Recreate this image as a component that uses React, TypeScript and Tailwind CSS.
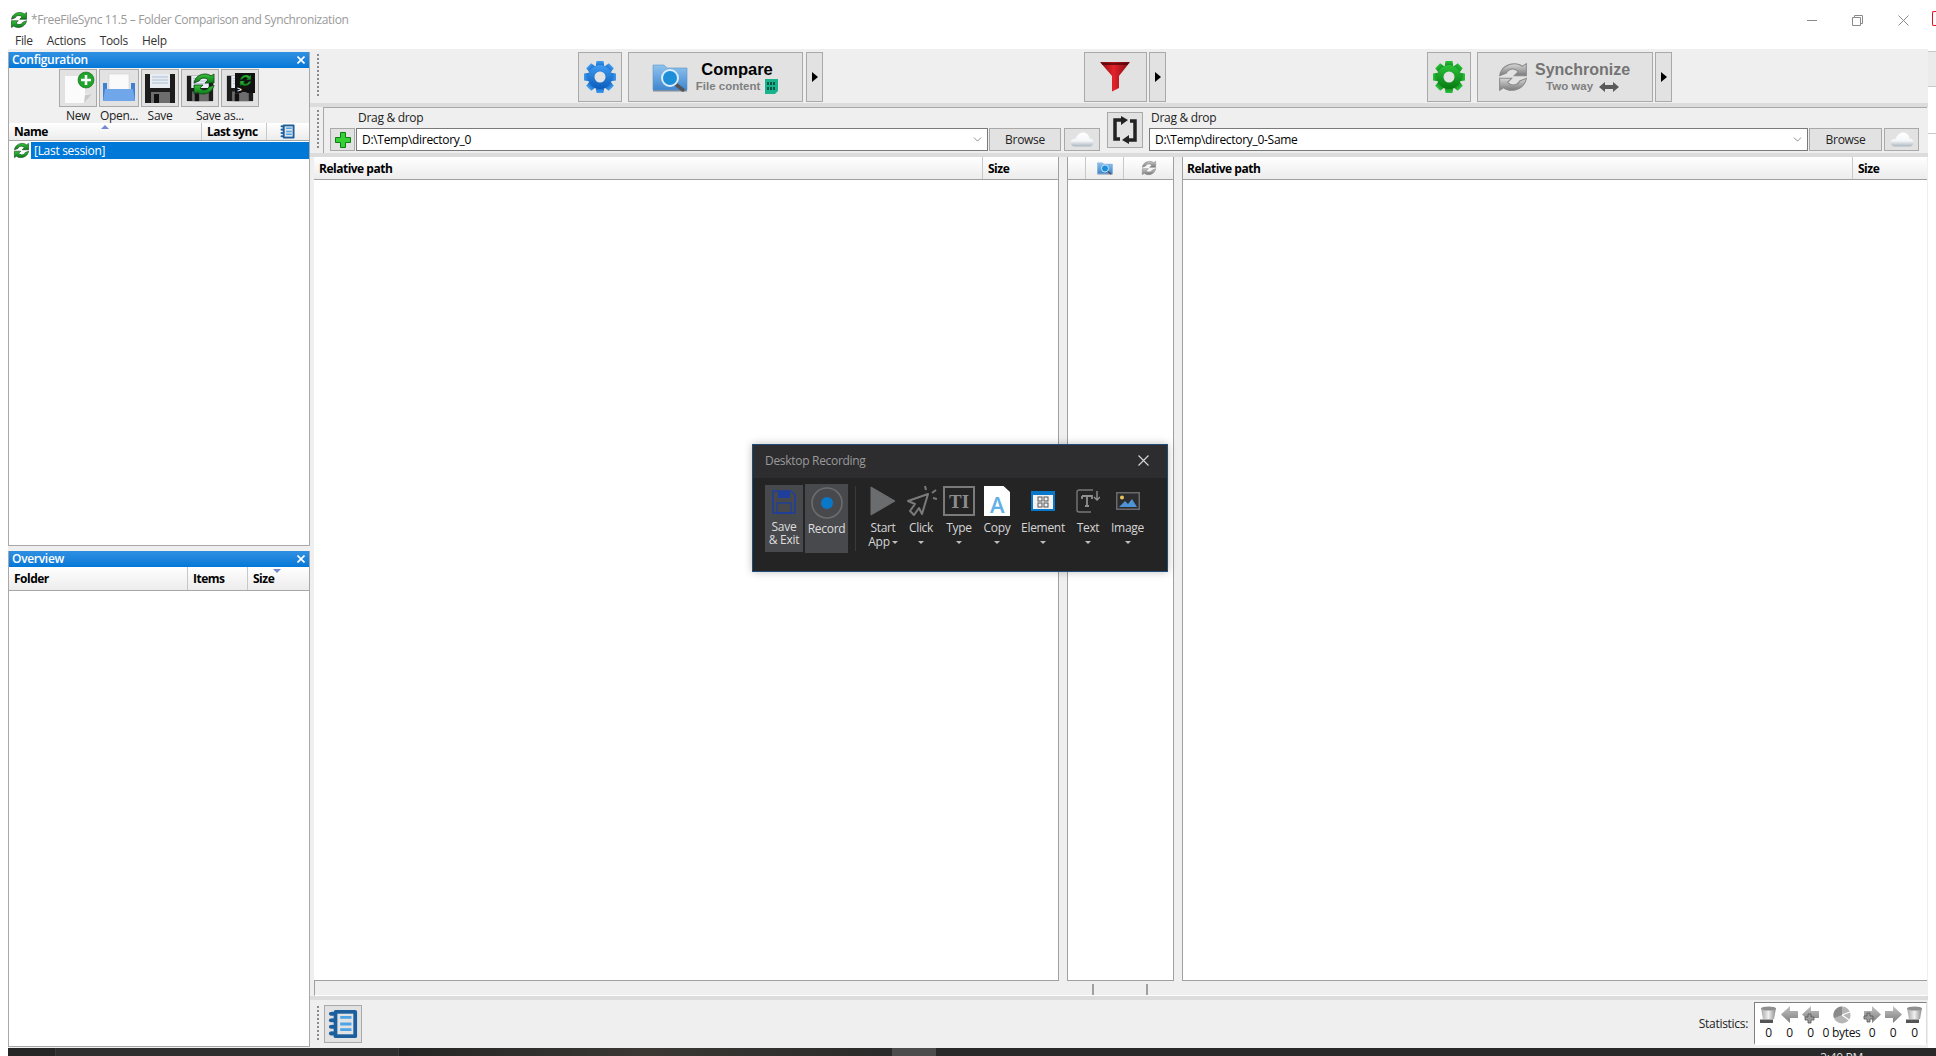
import React from "react";
import { ChevronDown } from "lucide-react";

const S = ({ w, h, vb, children, className = "" }: { w: number; h: number; vb?: string; children: React.ReactNode; className?: string }) => (
  <svg width={w} height={h} viewBox={vb ?? `0 0 ${w} ${h}`} className={"shrink-0 block " + className}>
    {children}
  </svg>
);

const Cross = ({ size, color, sw }: { size: number; color: string; sw: number }) => (
  <S w={size} h={size}>
    <path d={`M0.500 0.500L${size - 0.5} ${size - 0.5}M${size - 0.5} 0.500L0.500 ${size - 0.5}`} stroke={color} strokeWidth={sw} fill="none" />
  </S>
);

function Sync({ size = 18, c1 = "#35c43a", c2 = "#0d7a1a", dark = "#0b3d12", id = "sg" }: { size?: number; c1?: string; c2?: string; dark?: string; id?: string }) {
  return (
    <S w={size} h={size} vb="0 0 24 24">
      <defs>
        <linearGradient id={id} x1="0" y1="0" x2="0" y2="1">
          <stop offset="0" stopColor={c1} />
          <stop offset="1" stopColor={c2} />
        </linearGradient>
      </defs>
      <path d="M2 11C3 5 8 2 13 2c3 0 5 1 6 2l3-2v9h-9l3-3c-1-1-2-2-4-2-2.500 0-4 1-5 3z" fill={`url(#${id})`} stroke={dark} strokeWidth="0.8" />
      <path d="M22 13c-1 6-6 9-11 9-3 0-5-1-6-2l-3 2v-9h9l-3 3c1 1 2 2 4 2 2.500 0 4-1 5-3z" fill={`url(#${id})`} stroke={dark} strokeWidth="0.8" />
    </S>
  );
}

function Gear({ id, c1, c2, hole = "#e3e3e3" }: { id: string; c1: string; c2: string; hole?: string }) {
  return (
    <S w={34} h={34} vb="0 0 34 34">
      <defs>
        <linearGradient id={id} x1="0" y1="0" x2="0" y2="1">
          <stop offset="0" stopColor={c1} />
          <stop offset="1" stopColor={c2} />
        </linearGradient>
      </defs>
      <g fill={`url(#${id})`}>
        {[0, 45, 90, 135, 180, 225, 270, 315].map((a) => (
          <path key={a} d="M13.500 1h7l1 7h-9z" transform={`rotate(${a} 17 17)`} />
        ))}
        <circle cx="17" cy="17" r="12" />
      </g>
      <circle cx="17" cy="17" r="5.500" fill={hole} />
    </S>
  );
}

function CompareFolder({ w = 36, h = 30, id = "cf" }: { w?: number; h?: number; id?: string }) {
  return (
    <S w={w} h={h} vb="0 0 36 30">
      <defs>
        <linearGradient id={id} x1="0" y1="0" x2="0" y2="1">
          <stop offset="0" stopColor="#8fc3ee" />
          <stop offset="1" stopColor="#3f86cf" />
        </linearGradient>
      </defs>
      <path d="M1 3h11l3 3h20v22H1z" fill={`url(#${id})`} stroke="#5b93c9" strokeWidth="0.6" />
      <rect x="1" y="28" width="34" height="1.500" fill="#7d8da0" />
      <path d="M22 21l9 7" stroke="#555" strokeWidth="3.500" strokeLinecap="round" />
      <circle cx="18" cy="16" r="8" fill="#1d8ed8" stroke="#d9ecfa" strokeWidth="2" />
    </S>
  );
}

function Funnel() {
  return (
    <S w={30} h={30} vb="0 0 30 30">
      <defs>
        <linearGradient id="fn" x1="0" y1="0" x2="1" y2="0">
          <stop offset="0" stopColor="#8a0d12" />
          <stop offset="0.45" stopColor="#e4222b" />
          <stop offset="1" stopColor="#7d0b0f" />
        </linearGradient>
      </defs>
      <path d="M0 0h30L19 14V26L12 29.500V14z" fill="url(#fn)" />
      <path d="M1 0.500h28l-1.500 2.500h-25z" fill="#4d0609" opacity="0.75" />
    </S>
  );
}

function Cloud({ id }: { id: string }) {
  return (
    <S w={24} h={15} vb="0 0 24 15">
      <defs>
        <linearGradient id={id} x1="0" y1="0" x2="0" y2="1">
          <stop offset="0" stopColor="#ffffff" />
          <stop offset="0.6" stopColor="#f4f6f8" />
          <stop offset="1" stopColor="#aab6bf" />
        </linearGradient>
      </defs>
      <path d="M5 14.500C2 14.500 0.500 12.500 0.500 10.500 0.500 8 3 6.500 5.500 7 7 3 10 0.500 13 0.500c3.500 0 6 2.500 6.500 6 2.500 0 4 2 4 4s-1.500 4-4 4z" fill={`url(#${id})`} />
    </S>
  );
}

function Floppy({ size = 32 }: { size?: number }) {
  return (
    <S w={size} h={size} vb="0 0 32 32">
      <path d="M1 2h30v29H1z" fill="#1c1c1c" />
      <rect x="6" y="2" width="20" height="14" fill="#e7edf3" />
      <path d="M8 5h16M8 8h16M8 11h16" stroke="#aebfd0" strokeWidth="1" />
      <rect x="7" y="20" width="19" height="11" fill="#6d6d6d" />
      <rect x="10" y="22" width="5" height="9" fill="#111" />
    </S>
  );
}

function Notebook({ size = 16 }: { size?: number }) {
  return (
    <S w={size} h={size} vb="0 0 32 32">
      <rect x="6" y="1" width="25" height="30" rx="2" fill="#1c5f9e" />
      <rect x="10" y="5" width="17" height="22" fill="#e3e3e3" />
      <path d="M13 9h12M13 16h12M13 22h12" stroke="#4ca3e8" strokeWidth="3" />
      <g fill="#1c5f9e">
        <ellipse cx="4.500" cy="5" rx="3.500" ry="2.200" />
        <ellipse cx="4.500" cy="12" rx="3.500" ry="2.200" />
        <ellipse cx="4.500" cy="19" rx="3.500" ry="2.200" />
        <ellipse cx="4.500" cy="26" rx="3.500" ry="2.200" />
      </g>
    </S>
  );
}

function Grip({ h }: { h: number }) {
  return (
    <div className="w-[2px] shrink-0 overflow-hidden" style={{ height: h }}>
      <div className="flex flex-col gap-[2px]">
        {Array.from({ length: Math.floor(h / 4) }).map((_, i) => (
          <div key={i} className="w-[2px] h-[2px] bg-[#8a8a8a]" />
        ))}
      </div>
    </div>
  );
}

const Arrow = () => <div className="w-0 h-0 border-y-[5px] border-y-transparent border-l-[6px] border-l-black" />;

function Bucket({ id }: { id: string }) {
  return (
    <S w={17} h={18} vb="0 0 17 18">
      <defs>
        <linearGradient id={id} x1="0" y1="0" x2="1" y2="0">
          <stop offset="0" stopColor="#a5a5a5" />
          <stop offset="0.5" stopColor="#f0f0f0" />
          <stop offset="1" stopColor="#888" />
        </linearGradient>
      </defs>
      <path d="M1 2h15l-2 11H3z" fill={`url(#${id})`} />
      <ellipse cx="8.500" cy="2.500" rx="7.500" ry="2" fill="#8f8f8f" />
      <rect x="0" y="13.500" width="13" height="3.500" fill="#555" />
    </S>
  );
}

function StatArrow({ dir, plus, id }: { dir: "l" | "r"; plus?: boolean; id: string }) {
  return (
    <S w={18} h={18} vb="0 0 18 18">
      <defs>
        <linearGradient id={id} x1="0" y1="0" x2="0" y2="1">
          <stop offset="0" stopColor="#c4c4c4" />
          <stop offset="1" stopColor="#7d7d7d" />
        </linearGradient>
      </defs>
      <g transform={dir === "r" ? "" : "matrix(-1 0 0 1 18 0)"}>
        <path d="M1 5h8V0l9 8.500-9 8.500v-5H1z" fill={`url(#${id})`} />
      </g>
      {plus && <path d={dir === "l" ? "M3 11h3V8h3v3h3v3H9v3H6v-3H3z" : "M1 10h3V7h3v3h3v3H7v3H4v-3H1z"} fill="#9d9d9d" stroke="#555" strokeWidth="0.8" />}
    </S>
  );
}

const ColHead = ({ w, children, cls = "" }: { w?: number; children?: React.ReactNode; cls?: string }) => (
  <div className={"h-full flex items-center pt-[1px] shrink-0 font-bold text-[12px] tracking-[-0.5px] text-black " + cls} style={w ? { width: w } : undefined}>
    {children}
  </div>
);

function PanelHeader({ title }: { title: string }) {
  return (
    <div className="h-[16px] shrink-0 flex items-center justify-between pl-[3px] pr-[4px] bg-gradient-to-b from-[#2e90e2] to-[#0078d7] text-white text-[12px] font-semibold leading-none">
      <span>{title}</span>
      <Cross size={8} color="#ffffff" sw={1.6} />
    </div>
  );
}

const btn = "border border-[#a9a9a9] bg-[#e2e2e2] flex items-center justify-center shrink-0";

function DlgItem({ w, label, label2, icon, caret = true }: { w: number; label: string; label2?: string; icon: React.ReactNode; caret?: boolean }) {
  return (
    <div className="flex flex-col items-center shrink-0" style={{ width: w }}>
      <div className="h-[32px] flex items-center justify-center">{icon}</div>
      <div className="mt-[4px] text-[12px] leading-[14px] text-[#d6d6d6] whitespace-nowrap">{label}</div>
      {label2 ? (
        <div className="text-[12px] leading-[14px] text-[#d6d6d6] flex items-center gap-[2px] whitespace-nowrap">
          {label2}
          <span className="inline-block w-0 h-0 border-x-[3px] border-x-transparent border-t-[3px] border-t-[#bdbdbd]" />
        </div>
      ) : caret ? (
        <div className="mt-[6px] w-0 h-0 border-x-[3px] border-x-transparent border-t-[3px] border-t-[#bdbdbd]" />
      ) : null}
    </div>
  );
}

function Dialog() {
  return (
    <div className="absolute left-[752px] top-[444px] w-[416px] h-[128px] border border-[#1d4d78] bg-[#242425] shadow-[0_0_8px_rgba(0,0,0,0.25)] flex flex-col">
      <div className="h-[33px] shrink-0 bg-[#2d2d30] flex items-center justify-between pl-[12px] pr-[18px] pb-[2px]">
        <span className="text-[12px] text-[#9a9a9a]">Desktop Recording</span>
        <Cross size={11} color="#d8d8d8" sw={1.1} />
      </div>
      <div className="flex items-start pt-[6px] pl-[12px]">
        <div className="w-[38px] h-[67px] mt-[1px] bg-[#48494d] flex flex-col items-center pt-[5px] shrink-0">
          <S w={24} h={24} vb="0 0 24 24">
            <path d="M1 1h18l4 4v18H1z" fill="none" stroke="#1f3f9c" strokeWidth="1.600" />
            <rect x="6" y="1" width="12" height="7" fill="#1f3f9c" />
            <rect x="5" y="13" width="14" height="10" fill="none" stroke="#1f3f9c" strokeWidth="1.400" />
          </S>
          <div className="mt-[6px] text-[12px] leading-[13px] text-[#dedede] text-center whitespace-nowrap">Save<br />&amp; Exit</div>
        </div>
        <div className="ml-[2px] w-[43px] h-[69px] bg-[#48494d] flex flex-col items-center pt-[3px] shrink-0">
          <S w={32} h={32} vb="0 0 32 32">
            <circle cx="16" cy="16" r="15" fill="none" stroke="#6c6c6c" strokeWidth="1.600" />
            <circle cx="16" cy="16" r="6" fill="#0a78c9" />
          </S>
          <div className="mt-[3px] text-[12px] leading-[14px] text-[#dedede]">Record</div>
        </div>
        <div className="ml-[7px] mt-[2px] w-px h-[65px] bg-[#3a3a3a] shrink-0" />
        <div className="flex pt-[1px] ml-[7px]">
          <DlgItem w={40} label="Start" label2="App" icon={
            <S w={26} h={30} vb="0 0 26 30"><path d="M1 1l24 14L1 29z" fill="#6b6c6e" stroke="#6b6c6e" strokeLinejoin="round" /></S>
          } />
          <DlgItem w={36} label="Click" icon={
            <S w={32} h={32} vb="0 0 32 32">
              <path d="M23 9L3 16l7 3-5 7 4 4 5-7 3 6z" fill="none" stroke="#7a7a7a" strokeWidth="2" strokeLinejoin="round" />
              <path d="M21 5l-1-4M27 8l4-3M28 13l4 1" stroke="#7a7a7a" strokeWidth="2" />
            </S>
          } />
          <DlgItem w={40} label="Type" icon={
            <div className="w-[32px] h-[30px] border-2 border-[#7a7a7a] flex items-center justify-center text-[#8c8c8c] text-[19px] font-bold leading-none tracking-normal font-['Liberation_Serif',serif]">TI</div>
          } />
          <DlgItem w={36} label="Copy" icon={
            <div className="w-[26px] h-[30px] bg-white flex items-end justify-center text-[#62b0e6] text-[22px] font-semibold leading-[24px] [clip-path:polygon(0_0,75%_0,100%_20%,100%_100%,0_100%)]">A</div>
          } />
          <DlgItem w={56} label="Element" icon={
            <S w={24} h={20} vb="0 0 24 20">
              <rect width="24" height="20" fill="#0a78c9" />
              <rect x="2" y="4" width="20" height="14" fill="#f2f2f2" />
              <g fill="none" stroke="#555" strokeWidth="1">
                <rect x="7" y="6" width="4" height="4" /><rect x="13" y="6" width="4" height="4" />
                <rect x="7" y="12" width="4" height="4" /><rect x="13" y="12" width="4" height="4" />
              </g>
            </S>
          } />
          <DlgItem w={34} label="Text" icon={
            <S w={24} h={24} vb="0 0 24 24">
              <path d="M17 1H3a2 2 0 0 0-2 2v18a2 2 0 0 0 2 2h12" fill="none" stroke="#777" strokeWidth="1.400" />
              <path d="M6 7h10v3M11 7v10M9 17h4M6 7v3" fill="none" stroke="#909090" strokeWidth="1.800" />
              <path d="M21 2v9M18 8l3 3 3-3" fill="none" stroke="#909090" strokeWidth="1.400" />
            </S>
          } />
          <DlgItem w={45} label="Image" icon={
            <S w={24} h={18} vb="0 0 24 18">
              <rect width="24" height="18" fill="#6a6a6c" />
              <rect x="1.500" y="1.500" width="21" height="15" fill="#2c2c2e" />
              <circle cx="6" cy="5.500" r="2" fill="#e8c65a" />
              <path d="M3 15l6-6 3 3 4-5 5 8z" fill="#4d94d6" />
            </S>
          } />
        </div>
      </div>
    </div>
  );
}

export default function App() {
  const stats: [React.ReactNode, string, number][] = [
    [<Bucket id="b1" />, "0", 21],
    [<StatArrow dir="l" id="a1" />, "0", 21],
    [<StatArrow dir="l" plus id="a2" />, "0", 21],
    [
      <S w={18} h={18} vb="0 0 18 18">
        <circle cx="9" cy="9" r="8.500" fill="#b5b5b5" />
        <path d="M9 9l8-3M9 9l7 5" stroke="#fff" strokeWidth="1.200" />
        <path d="M9 9V0.500A8.500 8.500 0 0 0 1 12z" fill="#8a8a8a" />
      </S>,
      "0 bytes",
      41,
    ],
    [<StatArrow dir="r" plus id="a3" />, "0", 20],
    [<StatArrow dir="r" id="a4" />, "0", 22],
    [<Bucket id="b2" />, "0", 21],
  ];

  return (
    <div className="relative w-[1936px] h-[1056px] overflow-hidden bg-white flex flex-col text-[12px] tracking-[-0.3px] text-[#1a1a1a] font-['Open_Sans','Noto_Sans',sans-serif]">
      {/* Title bar */}
      <div className="h-[32px] shrink-0 flex items-center pt-[8px] pl-[10px]">
        <Sync size={18} id="tsg" />
        <span className="ml-[3px] text-[#9a9a9a] text-[12px] tracking-[-0.37px]">*FreeFileSync 11.5 – Folder Comparison and Synchronization</span>
        <div className="ml-auto flex items-center pr-[27px]">
          <div className="w-[10px] h-px bg-[#8a8a8a]" />
          <S w={11} h={11} className="ml-[35px]">
            <path d="M0.500 2.500h8v8h-8zM2.500 2.500v-2h8v8h-2" fill="none" stroke="#8a8a8a" />
          </S>
          <div className="ml-[35px]"><Cross size={11} color="#8a8a8a" sw={1} /></div>
        </div>
      </div>
      {/* Menu */}
      <div className="h-[17px] shrink-0 flex items-center pl-[15px] gap-[14px] text-[#333] text-[12px]">
        <span>File</span><span>Actions</span><span>Tools</span><span>Help</span>
      </div>
      {/* Body */}
      <div className="h-[999px] shrink-0 flex">
        <div className="w-[8px] shrink-0" />
        {/* Left panels */}
        <div className="w-[302px] shrink-0 bg-[#efefef] pt-[3px] flex flex-col">
          <div className="h-[494px] shrink-0 border-x border-b border-[#a8a8a8] bg-white flex flex-col">
            <PanelHeader title="Configuration" />
            <div className="bg-[#f0f0f0] h-[55px] shrink-0 pl-[50px] pt-[1px]">
              <div className="flex gap-[2px]">
                <div className={btn + " w-[38px] h-[38px]"}>
                  <S w={34} h={34}>
                    <path d="M4 5h20v18l7 0-8 9H4z" fill="#fbfbfb" />
                    <path d="M23 32l1-8 7-1z" fill="#c8c8c8" />
                    <circle cx="25" cy="9" r="8" fill="#1fa32a" stroke="#0c6a15" strokeWidth="0.6" />
                    <path d="M25 4v10M20 9h10" stroke="#fff" strokeWidth="2.600" />
                  </S>
                </div>
                <div className={btn + " w-[40px] h-[38px]"}>
                  <S w={34} h={30}>
                    <rect x="7" y="1" width="20" height="16" fill="#fafafa" stroke="#ccc" strokeWidth="0.5" />
                    <path d="M1 10h4v6h24v-6h4v18H1z" fill="#3f7fd4" />
                    <path d="M3 16h28l2 12H1z" fill="#6fa7ea" />
                  </S>
                </div>
                <div className={btn + " w-[38px] h-[38px]"}><Floppy /></div>
                <div className={btn + " w-[38px] h-[38px] relative"}>
                  <Floppy size={28} />
                  <div className="absolute right-[2px] top-[2px]"><Sync size={24} id="sas" /></div>
                </div>
                <div className={btn + " w-[38px] h-[38px] relative"}>
                  <Floppy size={28} />
                  <div className="absolute right-[3px] top-[3px] w-[20px] h-[20px] bg-[#111] flex flex-col items-center justify-center">
                    <Sync size={13} id="sat" />
                    <span className="text-white text-[8px] leading-[6px] font-bold self-start pl-[2px] font-['Liberation_Mono',monospace]">&gt;_</span>
                  </div>
                </div>
              </div>
              <div className="flex gap-[2px] h-[18px] items-center text-[12px] leading-none text-[#222] whitespace-nowrap">
                <div className="w-[38px] text-center">New</div>
                <div className="w-[40px] flex justify-center">Open...</div>
                <div className="w-[38px] text-center">Save</div>
                <div className="w-[78px] text-center">Save as...</div>
              </div>
            </div>
            <div className="h-[18px] shrink-0 flex border-b border-[#a8a8a8] bg-gradient-to-b from-white to-[#ececec]">
              <ColHead w={193} cls="pl-[5px] border-r border-[#c8c8c8] relative">
                Name
                <span className="absolute left-[92px] top-[2px] w-0 h-0 border-x-[4px] border-x-transparent border-b-[4px] border-b-[#7488d0]" />
              </ColHead>
              <ColHead w={65} cls="pl-[5px] border-r border-[#c8c8c8]">Last sync</ColHead>
              <div className="flex-1 flex items-center justify-center pr-[2px]"><Notebook size={15} /></div>
            </div>
            <div className="h-[17px] mt-[1px] shrink-0 flex items-center">
              <div className="w-[22px] pl-[4px] shrink-0"><Sync size={17} id="lsg" /></div>
              <div className="flex-1 h-full bg-[#0078d7] text-white pl-[3px] flex items-center text-[12px]">[Last session]</div>
            </div>
          </div>
          <div className="h-[496px] mt-[5px] shrink-0 border-x border-b border-[#a8a8a8] bg-white flex flex-col">
            <PanelHeader title="Overview" />
            <div className="h-[24px] shrink-0 flex border-b border-[#a8a8a8] bg-gradient-to-b from-white to-[#ececec]">
              <ColHead w={179} cls="pl-[5px] border-r border-[#c8c8c8]">Folder</ColHead>
              <ColHead w={60} cls="pl-[5px] border-r border-[#c8c8c8]">Items</ColHead>
              <ColHead cls="pl-[5px] relative flex-1">
                Size
                <span className="absolute left-[25px] top-[2px] w-0 h-0 border-x-[4px] border-x-transparent border-t-[4px] border-t-[#7488d0]" />
              </ColHead>
            </div>
          </div>
        </div>
        {/* Main */}
        <div className="w-[1618px] shrink-0 bg-[#efefef] flex flex-col">
          {/* Toolbar */}
          <div className="h-[54px] shrink-0 flex items-start pt-[3px] pl-[7px]">
            <div className="mt-[2px]"><Grip h={46} /></div>
            <div className={btn + " ml-[259px] w-[44px] h-[50px]"}><Gear id="gb" c1="#3f9cf0" c2="#0a5cbc" /></div>
            <div className={btn + " ml-[6px] w-[175px] h-[50px] !justify-start pl-[23px] gap-[4px] tracking-normal"}>
              <CompareFolder />
              <div className="flex flex-col items-center w-[90px]">
                <span className="font-['Liberation_Sans',sans-serif] font-bold text-[16.5px] leading-[19px] text-black">Compare</span>
                <span className="flex items-center gap-[5px] font-['Liberation_Sans',sans-serif] font-bold text-[11.5px] leading-[15px] text-[#7f7f7f]">
                  File content
                  <S w={13} h={15}>
                    <path d="M0 0h13v12l-3 3H0z" fill="#17b38c" />
                    <path d="M3 3v3M6 3v3M9 3v3M3 8v3M6 8v3M9 8v3" stroke="#07372b" strokeWidth="1.500" />
                  </S>
                </span>
              </div>
            </div>
            <div className={btn + " ml-[3px] w-[17px] h-[50px]"}><Arrow /></div>
            <div className={btn + " ml-[261px] w-[63px] h-[50px] pr-[2px]"}><Funnel /></div>
            <div className={btn + " ml-[2px] w-[17px] h-[50px]"}><Arrow /></div>
            <div className={btn + " ml-[261px] w-[44px] h-[50px]"}><Gear id="gg" c1="#2cc23a" c2="#067a12" /></div>
            <div className={btn + " ml-[6px] w-[176px] h-[50px] !justify-start pl-[19px] gap-[6px] tracking-normal"}>
              <Sync size={32} c1="#d8d8d8" c2="#7a7a7a" dark="#8a8a8a" id="ss" />
              <div className="flex flex-col items-center">
                <span className="font-['Liberation_Sans',sans-serif] font-bold text-[16px] leading-[19px] text-[#747474]">Synchronize</span>
                <span className="flex items-center gap-[6px] font-['Liberation_Sans',sans-serif] font-bold text-[11.5px] leading-[15px] text-[#7f7f7f]">
                  Two way
                  <S w={20} h={10}>
                    <path d="M0 5l6-5v3h8V0l6 5-6 5V7H6v3z" fill="#5a5a5a" />
                  </S>
                </span>
              </div>
            </div>
            <div className={btn + " ml-[2px] w-[17px] h-[50px]"}><Arrow /></div>
          </div>
          <div className="h-[4px] shrink-0 bg-[#dcdcdc]" />
          {/* Folder row */}
          <div className="h-[46px] shrink-0 flex pl-[7px]">
            <div className="pt-[3px]"><Grip h={40} /></div>
            <div className="ml-[4px] w-[1604px] h-[46px] border-t border-l border-[#a8a8a8] flex">
              <div className="flex flex-col">
                <div className="h-[20px] flex items-center pl-[34px] text-[12px] text-[#222]">Drag &amp; drop</div>
                <div className="flex items-stretch h-[23px] pl-[6px]">
                  <div className={btn + " w-[25px]"}>
                    <S w={16} h={16}>
                      <path d="M5.500 0.500h5v5h5v5h-5v5h-5v-5h-5v-5h5z" fill="#35d135" stroke="#0f7a16" />
                    </S>
                  </div>
                  <div className="ml-[1px] w-[632px] bg-white border border-[#7a7a7a] flex items-center justify-between pl-[5px] pr-[3px] text-[12px] text-black">
                    D:\Temp\directory_0
                    <ChevronDown size={13} strokeWidth={1.2} className="text-[#555]" />
                  </div>
                  <div className={btn + " ml-[1px] w-[72px] text-[12px] text-[#222]"}>Browse</div>
                  <div className={btn + " ml-[3px] w-[36px]"}><Cloud id="c1" /></div>
                </div>
              </div>
              <div className={btn + " ml-[7px] mt-[4px] w-[36px] h-[36px]"}>
                <S w={24} h={28}>
                  <path d="M10 4H2v19h5M14 24h8V5h-5" fill="none" stroke="#222" strokeWidth="3.500" />
                  <path d="M8 0l7 4-7 5zM16 28l-7-4 7-5z" fill="#222" />
                </S>
              </div>
              <div className="flex flex-col ml-[6px]">
                <div className="h-[20px] flex items-center pl-[2px] text-[12px] text-[#222]">Drag &amp; drop</div>
                <div className="flex items-stretch h-[23px]">
                  <div className="w-[659px] bg-white border border-[#7a7a7a] flex items-center justify-between pl-[5px] pr-[3px] text-[12px] text-black">
                    D:\Temp\directory_0-Same
                    <ChevronDown size={13} strokeWidth={1.2} className="text-[#555]" />
                  </div>
                  <div className={btn + " ml-[1px] w-[73px] text-[12px] text-[#222]"}>Browse</div>
                  <div className={btn + " ml-[2px] w-[35px]"}><Cloud id="c2" /></div>
                </div>
              </div>
            </div>
          </div>
          <div className="h-[4px] shrink-0 bg-[#dcdcdc]" />
          {/* Grids */}
          <div className="h-[824px] shrink-0 flex pl-[4px] pr-[1px]">
            <div className="w-[745px] shrink-0 bg-white border-r border-b border-[#a0a0a0]">
              <div className="h-[23px] flex border-b border-[#a0a0a0] bg-gradient-to-b from-white to-[#ececec]">
                <ColHead w={669} cls="pl-[5px] border-r border-[#c8c8c8]">Relative path</ColHead>
                <ColHead cls="pl-[5px]">Size</ColHead>
              </div>
            </div>
            <div className="w-[8px] shrink-0" />
            <div className="w-[107px] shrink-0 bg-white border-x border-b border-[#a0a0a0]">
              <div className="h-[23px] flex items-stretch border-b border-[#a0a0a0] bg-gradient-to-b from-white to-[#ececec]">
                <div className="w-[18px] border-r border-[#c8c8c8]" />
                <div className="w-[38px] border-r border-[#c8c8c8] flex items-center justify-center"><CompareFolder w={16} h={14} id="cf2" /></div>
                <div className="flex-1 flex items-center justify-center"><Sync size={16} c1="#c8c8c8" c2="#777" dark="#888" id="ss2" /></div>
              </div>
            </div>
            <div className="w-[8px] shrink-0" />
            <div className="w-[745px] shrink-0 bg-white border-l border-b border-[#a0a0a0]">
              <div className="h-[23px] flex border-b border-[#a0a0a0] bg-gradient-to-b from-white to-[#ececec]">
                <ColHead w={670} cls="pl-[4px] border-r border-[#c8c8c8]">Relative path</ColHead>
                <ColHead cls="pl-[5px]">Size</ColHead>
              </div>
            </div>
          </div>
          {/* Scrollbar strip */}
          <div className="h-[15px] shrink-0 ml-[4px] mr-[1px] flex pt-[3px] border-b border-l border-b-white border-l-[#a0a0a0]">
            <div className="w-[779px] h-[11px] border-r-2 border-[#a0a0a0]" />
            <div className="w-[54px] h-[11px] border-r-2 border-[#a0a0a0]" />
          </div>
          <div className="h-[4px] shrink-0 bg-[#dcdcdc]" />
          {/* Bottom */}
          <div className="h-[48px] shrink-0 flex pl-[7px]">
            <div className="mt-[6px]"><Grip h={38} /></div>
            <div className={btn + " ml-[5px] mt-[5px] w-[38px] h-[38px]"}><Notebook size={30} /></div>
            <div className="ml-auto mr-[6px] flex items-center h-[48px] text-[12px] text-[#222]">Statistics:</div>
            <div className="mt-[2px] mr-[1px] w-[173px] h-[43px] bg-white border-t border-l border-[#808080] border-r border-b-2 border-r-[#dcdcdc] border-b-white pl-[3px] shrink-0">
              <div className="flex">
                {stats.map(([ic, t, w], i) => (
                  <div key={i} className="flex flex-col items-center shrink-0" style={{ width: w }}>
                    <div className="h-[20px] mt-[2px] flex items-center">{ic}</div>
                    <div className="text-[12px] leading-[15px] text-[#111] whitespace-nowrap">{t}</div>
                  </div>
                ))}
              </div>
            </div>
          </div>
        </div>
        {/* Right stripe: window behind */}
        <div className="flex-1 flex flex-col">
          <div className="h-[2px]" />
          <div className="h-[36px] bg-[#ebebeb] border-y border-[#c8c8c8]" />
          <div className="h-[47px] border-b border-[#c8c8c8]" />
        </div>
      </div>
      {/* Taskbar */}
      <div className="h-[8px] shrink-0 flex overflow-hidden">
        <div className="w-[8px] bg-white shrink-0" />
        <div className="w-[48px] bg-[#262626] border-r border-[#3a3a3a] shrink-0" />
        <div className="w-[343px] bg-[#2f2f2f] border-r border-[#3e3e3e] shrink-0" />
        <div className="w-[493px] bg-gradient-to-r from-[#252525] via-[#3b3834] to-[#2a2a2a] shrink-0" />
        <div className="w-[44px] bg-[#4c4c4c] shrink-0" />
        <div className="flex-1 bg-[#292929] flex justify-end pr-[73px] pt-[4px] text-[#ddd] text-[12px] leading-[12px]">3:40 PM</div>
      </div>
      <div className="absolute right-0 top-[11px] w-[4px] h-[15px] border-y border-l border-[#e81123] rounded-l-[2px]" />
      <Dialog />
    </div>
  );
}
